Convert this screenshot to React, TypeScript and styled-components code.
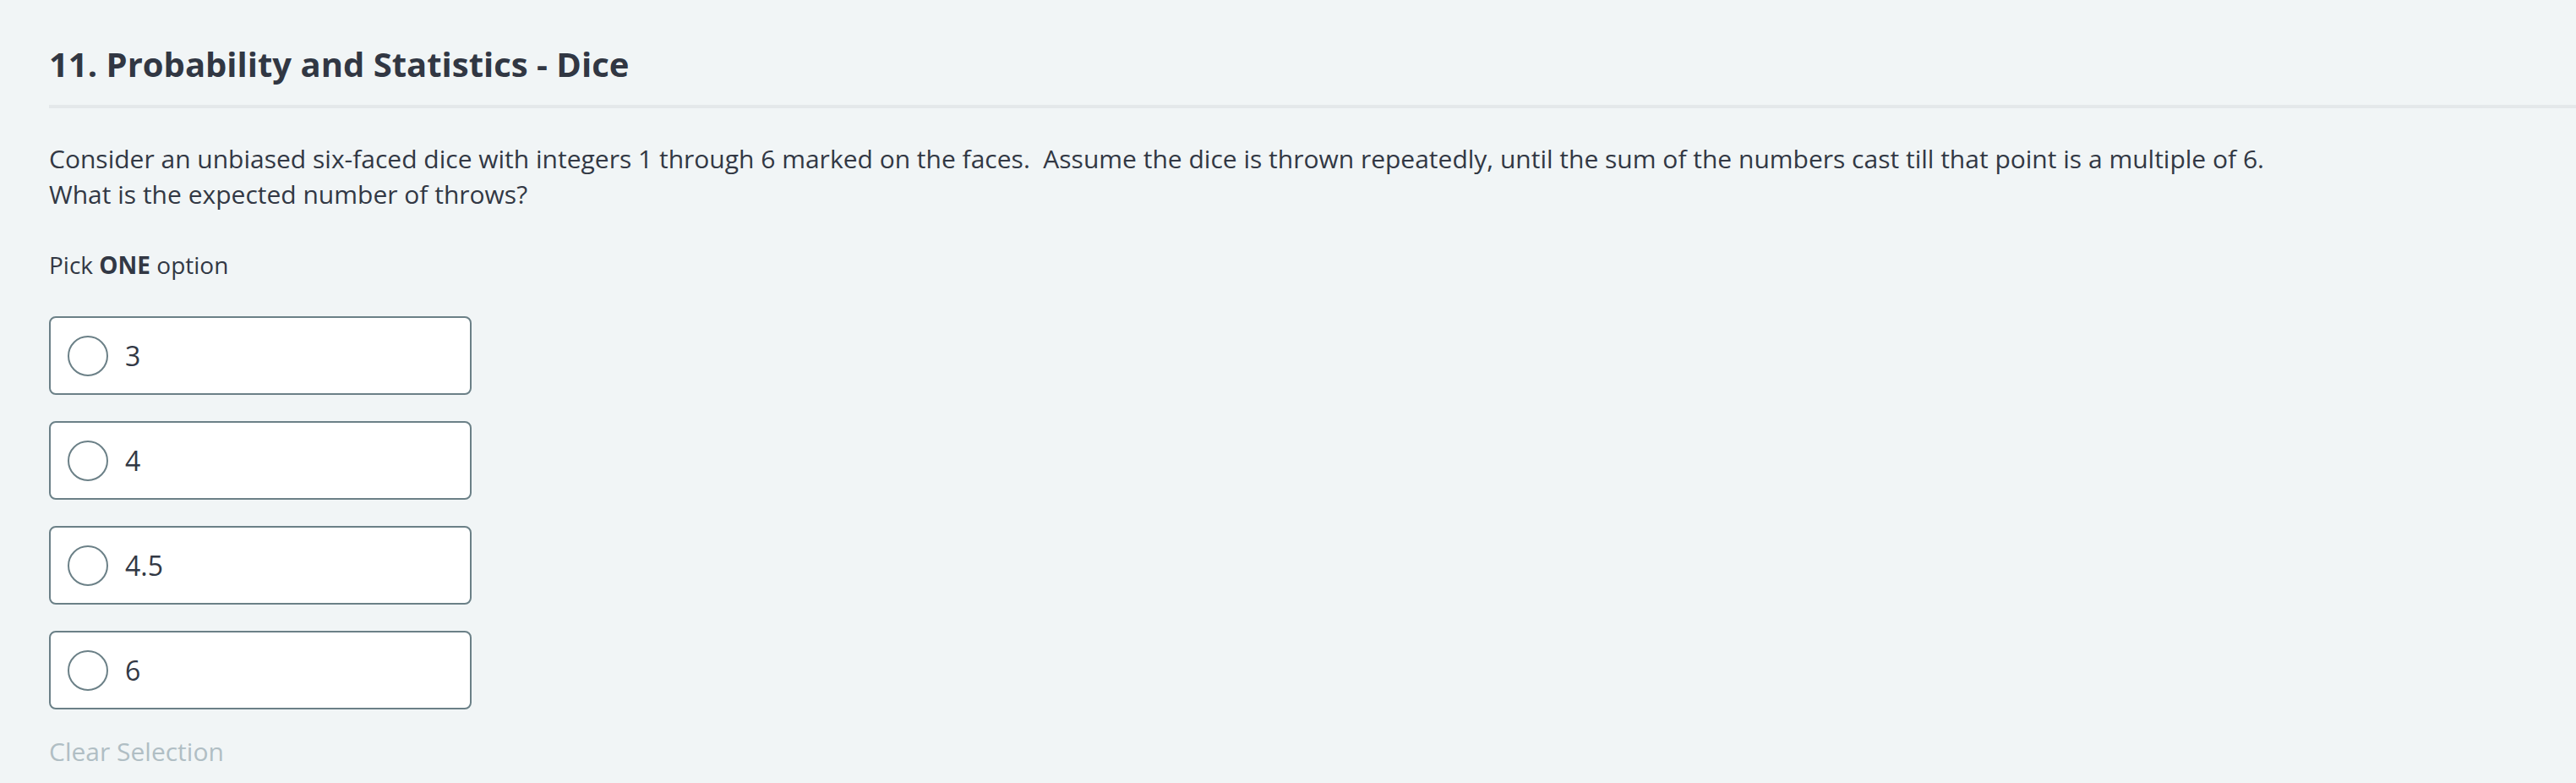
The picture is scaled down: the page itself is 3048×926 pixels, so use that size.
import React from "react";
import styled, { createGlobalStyle } from "styled-components";

const GlobalStyle = createGlobalStyle`
  html, body {
    margin: 0;
    padding: 0;
    background: #f1f5f6;
  }
  body {
    font-family: "Open Sans", "Noto Sans", sans-serif;
    color: #323844;
  }
`;

const Page = styled.main`
  min-height: 926px;
  padding-left: 58px;
  box-sizing: border-box;
`;

const Header = styled.header`
  padding-top: 52px;
  padding-bottom: 24px;
  border-bottom: 4px solid #e4e8ea;
`;

const Title = styled.h1`
  margin: 0;
  font-size: 40px;
  line-height: 48px;
  font-weight: 700;
  color: #313743;
`;

const Statement = styled.p`
  margin: 39px 0 0;
  font-size: 30px;
  line-height: 42px;
  white-space: pre-wrap;
`;

const Hint = styled.p`
  margin: 41px 0 0;
  font-size: 28px;
  line-height: 42px;

  strong {
    font-weight: 700;
  }
`;

const Options = styled.ul`
  list-style: none;
  margin: 40px 0 0;
  padding: 0;
  display: flex;
  flex-direction: column;
  gap: 31px;
`;

const Option = styled.li`
  box-sizing: border-box;
  width: 500px;
  height: 93px;
  display: flex;
  align-items: center;
  gap: 20px;
  padding-left: 20px;
  background: #ffffff;
  border: 2px solid #6b8087;
  border-radius: 8px;
  cursor: pointer;
`;

const Radio = styled.span`
  box-sizing: border-box;
  width: 48px;
  height: 48px;
  border: 2px solid #6b8087;
  border-radius: 50%;
  flex: 0 0 auto;
`;

const OptionLabel = styled.span`
  font-size: 32px;
  line-height: 44px;
  color: #323844;
`;

const ClearButton = styled.button`
  display: block;
  margin: 29px 0 0;
  padding: 0;
  border: none;
  background: none;
  font-family: "Open Sans", "Noto Sans", sans-serif;
  font-size: 30px;
  line-height: 42px;
  color: #b0bec4;
  cursor: pointer;
`;

const choices = ["3", "4", "4.5", "6"];

export default function App() {
  return (
    <Page>
      <GlobalStyle />
      <Header>
        <Title>11. Probability and Statistics - Dice</Title>
      </Header>
      <Statement>
        {"Consider an unbiased six-faced dice with integers 1 through 6 marked on the faces.  Assume the dice is thrown repeatedly, until the sum of the numbers cast till that point is a multiple of 6.\nWhat is the expected number of throws?"}
      </Statement>
      <Hint>
        Pick <strong>ONE</strong> option
      </Hint>
      <Options>
        {choices.map((c) => (
          <Option key={c}>
            <Radio />
            <OptionLabel>{c}</OptionLabel>
          </Option>
        ))}
      </Options>
      <ClearButton>Clear Selection</ClearButton>
    </Page>
  );
}
